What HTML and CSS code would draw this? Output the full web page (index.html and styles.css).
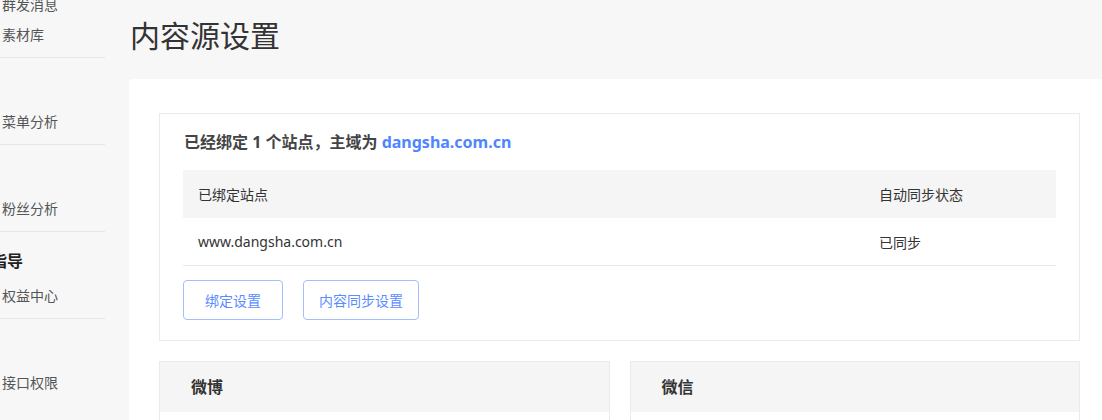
FILE: index.html
```html
<!DOCTYPE html>
<html lang="zh">
<head>
<meta charset="utf-8">
<title>内容源设置</title>
<link rel="stylesheet" href="styles.css">
</head>
<body>
<div class="layout">
  <aside class="sidebar">
    <div class="group group-first">
      <div class="item">群发消息</div>
      <div class="item">素材库</div>
    </div>
    <div class="group">
      <div class="heading"></div>
      <div class="item">菜单分析</div>
    </div>
    <div class="group">
      <div class="heading"></div>
      <div class="item">粉丝分析</div>
    </div>
    <div class="group">
      <div class="heading heading-cut">指导</div>
      <div class="item">权益中心</div>
    </div>
    <div class="group group-last">
      <div class="heading"></div>
      <div class="item">接口权限</div>
    </div>
  </aside>
  <main class="main">
    <h1 class="page-title">内容源设置</h1>
    <section class="panel">
      <div class="bind-box">
        <h2 class="bind-title">已经绑定 1 个站点，主域为 <span class="domain">dangsha.com.cn</span></h2>
        <table class="site-table">
          <colgroup><col class="col-site"><col class="col-status"></colgroup>
          <thead>
            <tr><th>已绑定站点</th><th>自动同步状态</th></tr>
          </thead>
          <tbody>
            <tr><td>www.dangsha.com.cn</td><td>已同步</td></tr>
          </tbody>
        </table>
        <div class="actions">
          <button class="btn btn-bind">绑定设置</button>
          <button class="btn btn-sync">内容同步设置</button>
        </div>
      </div>
      <div class="cards">
        <div class="card">
          <div class="card-head">微博</div>
          <div class="card-body"></div>
        </div>
        <div class="card">
          <div class="card-head">微信</div>
          <div class="card-body"></div>
        </div>
      </div>
    </section>
  </main>
</div>
</body>
</html>
```

FILE: styles.css
```css
html, body {
  margin: 0;
  padding: 0;
  overflow: hidden;
  background: #f7f7f7;
}
body {
  font-family: "Noto Sans", "Noto Sans CJK SC", sans-serif;
  color: #333;
  width: 1102px;
  height: 420px;
}
.layout {
  display: flex;
  align-items: flex-start;
}
.sidebar {
  width: 105px;
  flex-shrink: 0;
  display: flex;
  flex-direction: column;
}
.group {
  padding: 14px 0 7px;
  border-bottom: 1px solid #e6e6e6;
}
.group-first {
  margin-top: -26px;
  padding-top: 0;
  height: 76px;
  display: flex;
  flex-direction: column;
  justify-content: flex-end;
}
.group-last {
  border-bottom: none;
}
.heading {
  height: 30px;
  line-height: 30px;
  margin-bottom: 5px;
  font-size: 16px;
  font-weight: bold;
  color: #222;
  white-space: nowrap;
}
.heading-cut {
  margin-left: -9px;
}
.item {
  height: 30px;
  line-height: 30px;
  font-size: 14px;
  color: #555;
  padding-left: 2px;
  white-space: nowrap;
}
.main {
  margin-left: 24px;
  width: 981px;
  flex-shrink: 0;
}
.page-title {
  margin: 0;
  height: 79px;
  line-height: 72px;
  font-size: 30px;
  font-weight: normal;
  color: #333;
  padding-left: 1px;
}
.panel {
  background: #fff;
  border-radius: 4px 4px 0 0;
  padding: 34px 30px 30px;
  height: 400px;
}
.bind-box {
  border: 1px solid #ebebeb;
  padding: 16px 23px 20px;
}
.bind-title {
  margin: 0 0 16px;
  font-size: 16px;
  line-height: 24px;
  font-weight: bold;
  color: #444;
  padding-left: 1px;
}
.domain {
  color: #4f86ff;
}
.site-table {
  width: 100%;
  border-collapse: collapse;
  font-size: 14px;
}
.col-site { width: 78%; }
.col-status { width: 22%; }
.site-table th {
  background: #f5f5f5;
  height: 48px;
  padding: 0 15px;
  text-align: left;
  font-weight: normal;
  color: #333;
}
.site-table td {
  height: 47px;
  padding: 0 15px;
  border-bottom: 1px solid #e8e8e8;
  color: #333;
}
.actions {
  display: flex;
  gap: 20px;
  margin-top: 14px;
}
.btn {
  height: 40px;
  border: 1px solid #a3bdff;
  border-radius: 4px;
  background: #fff;
  color: #5b8cff;
  font-family: "Noto Sans CJK SC", sans-serif;
  font-size: 14px;
  padding: 0;
}
.btn-bind { width: 100px; }
.btn-sync { width: 116px; }
.cards {
  display: grid;
  grid-template-columns: 1fr 1fr;
  gap: 20px;
  margin-top: 20px;
}
.card {
  border: 1px solid #ebebeb;
}
.card-head {
  height: 50px;
  line-height: 50px;
  background: #f5f5f5;
  padding-left: 31px;
  font-size: 16px;
  font-weight: bold;
  color: #333;
}
.card-body {
  height: 150px;
}
```
